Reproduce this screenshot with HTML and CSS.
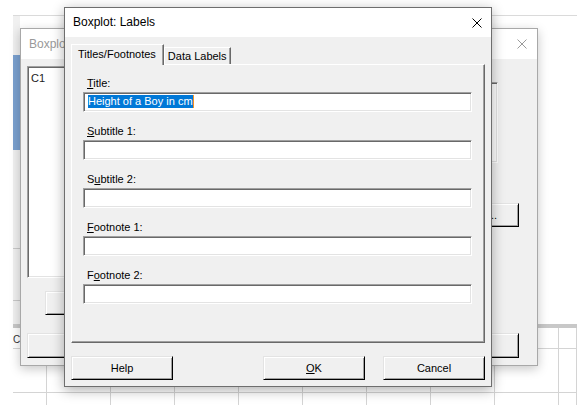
FILE: index.html
```html
<!DOCTYPE html>
<html>
<head>
<meta charset="utf-8">
<title>Boxplot: Labels</title>
<link rel="stylesheet" href="styles.css">
</head>
<body>
<div class="desk">
  <div class="app">
    <div class="upper">
      <div class="strip">
        <div class="strip-blue"></div>
        <div class="strip-line"></div>
        <div class="strip-line l2"></div>
      </div>
      <div class="sheet"></div>
    </div>
    <div class="band"></div>
    <div class="grid">
      <div class="cell hdr">C3</div><div class="cell"></div><div class="cell"></div><div class="cell"></div><div class="cell"></div><div class="cell"></div><div class="cell"></div><div class="cell"></div><div class="cell"></div><div class="cell"></div>
      <div class="cell"></div><div class="cell"></div><div class="cell"></div><div class="cell"></div><div class="cell"></div><div class="cell"></div><div class="cell"></div><div class="cell"></div><div class="cell"></div><div class="cell"></div>
      <div class="cell"></div><div class="cell"></div><div class="cell"></div><div class="cell"></div><div class="cell"></div><div class="cell"></div><div class="cell"></div><div class="cell"></div><div class="cell"></div><div class="cell"></div>
    </div>
  </div>

  <div class="win back">
    <div class="titlebar back-title">
      <span class="title-text">Boxplot</span>
      <svg class="close" width="10" height="10" viewBox="0 0 10 10"><path d="M0.5 0.5L9.5 9.5M9.5 0.5L0.5 9.5" stroke="#9a9a9a" stroke-width="1" fill="none"/></svg>
    </div>
    <div class="back-body">
      <div class="b-top">
        <div class="sunken listbox"><span>C1</span></div>
        <div class="b-right">
          <div class="sunken smallbox"></div>
          <div class="btn b-labels">Labels...</div>
        </div>
      </div>
      <div class="b-mid"><div class="btn b-sel"></div></div>
      <div class="b-bot"><div class="btn b-left"></div><div class="btn b-right-btn"></div></div>
    </div>
  </div>

  <div class="win front">
    <div class="titlebar">
      <span class="title-text">Boxplot: Labels</span>
      <svg class="close" width="10" height="10" viewBox="0 0 10 10"><path d="M0.5 0.5L9.5 9.5M9.5 0.5L0.5 9.5" stroke="#000" stroke-width="1" fill="none"/></svg>
    </div>
    <div class="front-body">
      <div class="tabs">
        <div class="tab sel">Titles/Footnotes</div>
        <div class="tab">Data Labels</div>
      </div>
      <div class="panel">
        <div class="field">
          <div class="lbl"><u>T</u>itle:</div>
          <div class="sunken input"><span class="sel-text">Height of a Boy in cm</span><span class="caret"></span></div>
        </div>
        <div class="field">
          <div class="lbl"><u>S</u>ubtitle 1:</div>
          <div class="sunken input"></div>
        </div>
        <div class="field">
          <div class="lbl">S<u>u</u>btitle 2:</div>
          <div class="sunken input"></div>
        </div>
        <div class="field">
          <div class="lbl"><u>F</u>ootnote 1:</div>
          <div class="sunken input"></div>
        </div>
        <div class="field">
          <div class="lbl">F<u>o</u>otnote 2:</div>
          <div class="sunken input"></div>
        </div>
      </div>
      <div class="buttons">
        <div class="btn">Help</div>
        <div class="spacer"></div>
        <div class="btn"><u>O</u>K</div>
        <div class="btn">Cancel</div>
      </div>
    </div>
  </div>
</div>
</body>
</html>
```

FILE: styles.css
```css
* { box-sizing: border-box; margin: 0; padding: 0; }
html, body { width: 577px; height: 405px; overflow: hidden; background: #fff; }
body {
  font-family: "Liberation Sans", Arial, sans-serif;
  font-size: 11px;
  line-height: 13px;
  color: #000;
  position: relative;
}
u { text-decoration: underline; text-underline-offset: 1px; }

/* background application */
.desk { padding: 15px 0 0 13px; height: 405px; overflow: hidden; }
.app { height: 390px; border-top: 1px solid #dadada; display: flex; flex-direction: column; overflow: hidden; }
.upper { height: 308px; display: flex; flex: none; }
.strip { width: 7px; background: #f0f0f0; padding-top: 39px; display: flex; flex-direction: column; }
.strip-blue { height: 95px; background: #7aa0cf; }
.strip-line { height: 1px; background: #c8c8c8; margin-top: 98px; }
.strip-line.l2 { margin-top: 51px; }
.sheet { flex: 1; background: #fff; }
.band { height: 4px; background: #c8c8c8; flex: none; }
.grid { display: grid; grid-template-columns: 34px repeat(8, 64px) 18px; grid-template-rows: 21px 44px 20px; }
.cell { border-right: 1px solid #d4d4d4; border-bottom: 1px solid #d4d4d4; }
.hdr { color: #333; padding: 5px 0 0 0; font-size: 10px; }

/* windows */
.win { position: absolute; background: #f0f0f0; display: flex; flex-direction: column; }
.front {
  left: 64px; top: 7px; width: 428px; height: 380px;
  border: 1px solid #6e6e6e;
  box-shadow: 0 3px 12px rgba(0, 0, 0, 0.32);
}
.back {
  left: 20px; top: 28px; width: 518px; height: 338px;
  border: 1px solid #a8a8a8;
  box-shadow: 0 3px 10px rgba(0, 0, 0, 0.22);
}
.titlebar {
  height: 29px; background: #fff; display: flex; align-items: center;
  padding: 0 9px 0 8px; font-size: 12px;
}
.titlebar .title-text { flex: 1; white-space: nowrap; }
.back-title { height: 30px; color: #999; padding-right: 10px; }
.close { display: block; }

/* sunken 3D border */
.sunken {
  background: #fff;
  border: 1px solid;
  border-color: #a0a0a0 #fff #fff #a0a0a0;
  box-shadow: inset 1px 1px 0 #696969, inset -1px -1px 0 #e3e3e3;
}

/* buttons */
.btn {
  height: 24px; width: 102px;
  background: #f0f0f0;
  border: 1px solid;
  border-color: #e3e3e3 #000 #000 #e3e3e3;
  box-shadow: inset 1px 1px 0 #fff, inset -1px -1px 0 #a0a0a0;
  display: flex; align-items: center; justify-content: center;
  white-space: nowrap;
}

/* back dialog body */
.back-body { flex: 1; display: flex; flex-direction: column; padding: 7px 18px 7px 6px; }
.b-top { height: 212px; display: flex; justify-content: space-between; }
.listbox { width: 200px; height: 212px; padding: 5px 0 0 3px; color: #222; }
.b-right { width: 81px; display: flex; flex-direction: column; align-items: flex-end; }
.smallbox { width: 60px; height: 81px; margin: 16px 21px 0 0; }
.b-labels { width: 81px; margin-top: 40px; justify-content: flex-end; padding-right: 21px; }
.b-mid { margin-top: 13px; padding-left: 18px; }
.b-sel { width: 80px; }
.b-bot { margin-top: 18px; display: flex; justify-content: space-between; }
.b-left { width: 110px; height: 25px; }
.b-right-btn { width: 110px; height: 25px; }

/* front dialog body */
.front-body { flex: 1; display: flex; flex-direction: column; padding: 7px 6px 6px 6px; }
.tabs { height: 20px; display: flex; align-items: flex-end; }
.tab {
  height: 17px; padding: 2px 3px 0 3px;
  border: 1px solid; border-bottom: none;
  border-color: #fff #696969 transparent #fff;
  box-shadow: inset -1px 0 0 #a0a0a0;
  white-space: nowrap;
}
.tab.sel {
  height: 21px; margin-bottom: -1px; padding: 3px 7px 0 6px;
  background: #f0f0f0; position: relative; z-index: 1;
}
.panel {
  height: 279px;
  border: 1px solid;
  border-color: #fff #696969 #696969 #fff;
  box-shadow: inset -1px -1px 0 #a0a0a0;
  padding: 12px 12px 0 11px;
  display: flex; flex-direction: column; gap: 13px;
}
.field { display: flex; flex-direction: column; gap: 2px; }
.lbl { padding-left: 4px; height: 13px; white-space: nowrap; }
.input { height: 20px; padding: 2px 4px 0 4px; display: flex; align-items: flex-start; }
.sel-text { background: #0078d7; color: #fff; height: 13px; line-height: 13px; white-space: nowrap; }
.caret { width: 1px; height: 13px; background: #f7931e; }

.buttons { margin-top: 13px; display: flex; gap: 18px; }
.buttons .spacer { flex: 1; }
```
